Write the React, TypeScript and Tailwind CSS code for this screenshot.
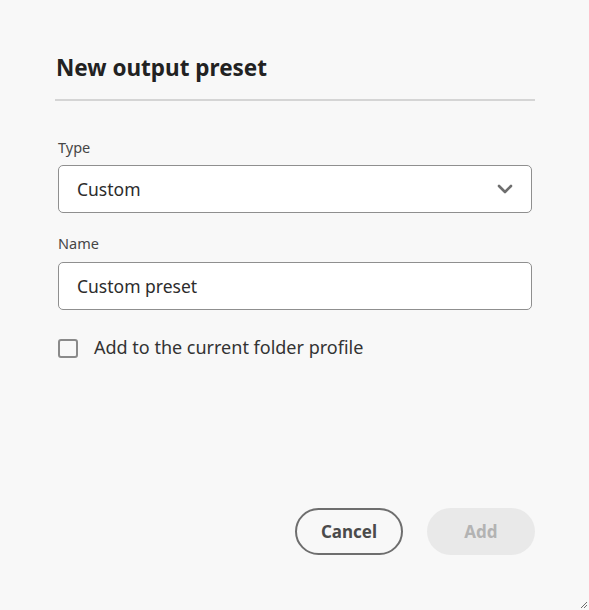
import React from 'react';

export default function App() {
  return (
    <div
      className="relative w-[589px] h-[610px] bg-[#f8f8f8] text-[#2c2c2c] overflow-hidden"
      style={{ fontFamily: '"Noto Sans", "Open Sans", sans-serif' }}
    >
      <div className="pl-[55px] pr-[54px] pt-[52px]">
        <h1 className="text-[22.5px] leading-[32px] font-bold text-[#222222] pl-[1px]">New output preset</h1>
        <div className="mt-[15px] h-[2px] bg-[#d5d5d5]" />

        <div className="pl-[3px] pr-[3px]">
          <label className="block mt-[36px] text-[14.5px] leading-[20px] text-[#464646]">Type</label>
          <button className="mt-[8px] w-full h-[48px] bg-white border border-[#8f8f8f] rounded-[5px] flex items-center justify-between pl-[18px] pr-[18px]">
            <span className="text-[17.5px] text-[#2c2c2c]">Custom</span>
            <svg width="16" height="10" viewBox="0 0 16 10" fill="none">
              <path d="M2 2 L8 8 L14 2" stroke="#6e6e6e" strokeWidth="2.6" strokeLinecap="round" strokeLinejoin="round" />
            </svg>
          </button>

          <label className="block mt-[20px] text-[14.5px] leading-[20px] text-[#464646]">Name</label>
          <div className="mt-[9px] w-full h-[48px] bg-white border border-[#8f8f8f] rounded-[5px] flex items-center pl-[18px]">
            <span className="text-[17.5px] text-[#2c2c2c]">Custom preset</span>
          </div>

          <label className="mt-[26px] flex items-center gap-[16px]">
            <span className="w-[20px] h-[19px] border-2 border-[#8a8a8a] rounded-[3px] bg-[#f8f8f8]" />
            <span className="text-[18px] text-[#333333] -mt-[2px]">Add to the current folder profile</span>
          </label>
        </div>

        <div className="mt-[147px] flex justify-end gap-[24px]">
          <button className="w-[108px] h-[47px] rounded-full border-2 border-[#6e6e6e] text-[17px] font-bold text-[#4b4b4b]">
            Cancel
          </button>
          <button className="w-[108px] h-[47px] rounded-full bg-[#e9e9e9] text-[17px] font-bold text-[#b3b3b3]">
            Add
          </button>
        </div>
      </div>

      <svg className="absolute right-[1px] bottom-[1px]" width="8" height="8" viewBox="0 0 8 8">
        <path d="M7 1 L1 7 M7 4 L4 7" stroke="#6e6e6e" strokeWidth="1" />
      </svg>
    </div>
  );
}
